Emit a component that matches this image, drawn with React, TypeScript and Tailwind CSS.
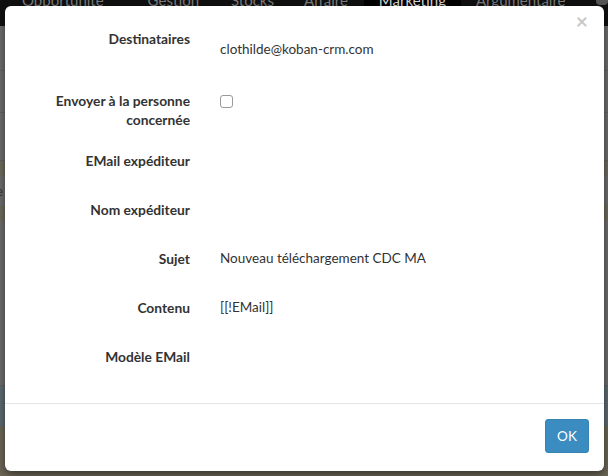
const tabs: { label: string; active?: boolean; ml: string }[] = [
  { label: "Opportunité", ml: "ml-[22px]" },
  { label: "Gestion", ml: "ml-[44px]" },
  { label: "Stocks", ml: "ml-[32px]" },
  { label: "Affaire", ml: "ml-[30px]" },
  { label: "Marketing", active: true, ml: "ml-[16px]" },
  { label: "Argumentaire", ml: "ml-[15px]" },
];

const Label = ({ children }: { children: React.ReactNode }) => (
  <div className="w-[170px] shrink-0 pt-[7px] text-right font-bold text-[13.8px] leading-[19px] text-[#333]">
    {children}
  </div>
);

export default function App() {
  return (
    <div className="relative w-[608px] h-[476px] overflow-hidden bg-[#6d6d6d] font-['Lato','Liberation_Sans',sans-serif]">
      {/* page behind the overlay */}
      <div className="flex h-[26px] items-start bg-[#101010] text-[15px] leading-[20px] text-[#7c7c7c]">
        {tabs.map((t) => (
          <div
            key={t.label}
            className={
              t.active
                ? `${t.ml} h-[26px] bg-black px-[15px] text-[#d8d8d8]`
                : `${t.ml}`
            }
          >
            <span className="block -mt-[10px]">{t.label}</span>
          </div>
        ))}
        <div className="ml-[30px] -mt-[4px] h-[9px] w-[13px] rounded-sm bg-[#555]" />
      </div>
      <div className="flex flex-col">
        <div className="h-[45px] border-b border-[#626262]" />
        <div className="h-[42px] border-b border-[#626262]" />
        <div className="h-[48px] border-b border-[#626262]" />
        <div className="h-[15px] bg-[#6e6a5c]" />
        <div className="h-[30px] text-[13px] leading-[30px] text-[#333]">
          <span className="-ml-[4px]">e</span>
        </div>
        <div className="h-[15px] bg-[#6e6a5c]" />
        <div className="h-[165px] border-b border-[#626262]" />
        <div className="h-[40px] bg-[#5d6b70]" />
        <div className="h-[50px] bg-[#6b6656]" />
      </div>

      {/* modal */}
      <div className="absolute left-[5px] top-[6px] w-[599px] h-[465px] rounded-[6px] bg-white shadow-[0_3px_9px_rgba(0,0,0,0.5)] flex flex-col">
        <button className="absolute right-[16px] top-[5px] text-[21px] font-bold leading-[20px] text-[#c8c8c8]">
          ×
        </button>
        <div className="flex flex-col gap-[15px] px-[15px] pt-[16px] pb-[29px]">
          <div className="flex gap-[30px] min-h-[47px]">
            <Label>Destinataires</Label>
            <div className="pt-[18px] text-[13.5px] leading-[19px] text-[#333]">
              clothilde@koban-crm.com
            </div>
          </div>
          <div className="flex gap-[30px]">
            <Label>
              Envoyer à la personne
              <br />
              concernée
            </Label>
            <div className="pt-[11px]">
              <div className="h-[13px] w-[13px] rounded-[3px] border border-[#9a9a9a] bg-white" />
            </div>
          </div>
          <div className="flex gap-[30px] h-[34px]">
            <Label>EMail expéditeur</Label>
          </div>
          <div className="flex gap-[30px] h-[34px]">
            <Label>Nom expéditeur</Label>
          </div>
          <div className="flex gap-[30px] h-[34px]">
            <Label>Sujet</Label>
            <div className="pt-[7px] text-[13.5px] leading-[19px] text-[#333]">
              Nouveau téléchargement CDC MA
            </div>
          </div>
          <div className="flex gap-[30px] h-[34px]">
            <Label>Contenu</Label>
            <div className="pt-[7px] text-[13.5px] leading-[19px] text-[#333]">
              [[!EMail]]
            </div>
          </div>
          <div className="flex gap-[30px] h-[34px]">
            <Label>Modèle EMail</Label>
          </div>
        </div>
        <div className="flex justify-end border-t border-[#e5e5e5] px-[15px] pt-[15px]">
          <button className="h-[34px] w-[44px] rounded-[3px] border border-[#3582b5] bg-[#3b8cc0] text-[13.5px] text-white">
            OK
          </button>
        </div>
      </div>
    </div>
  );
}
